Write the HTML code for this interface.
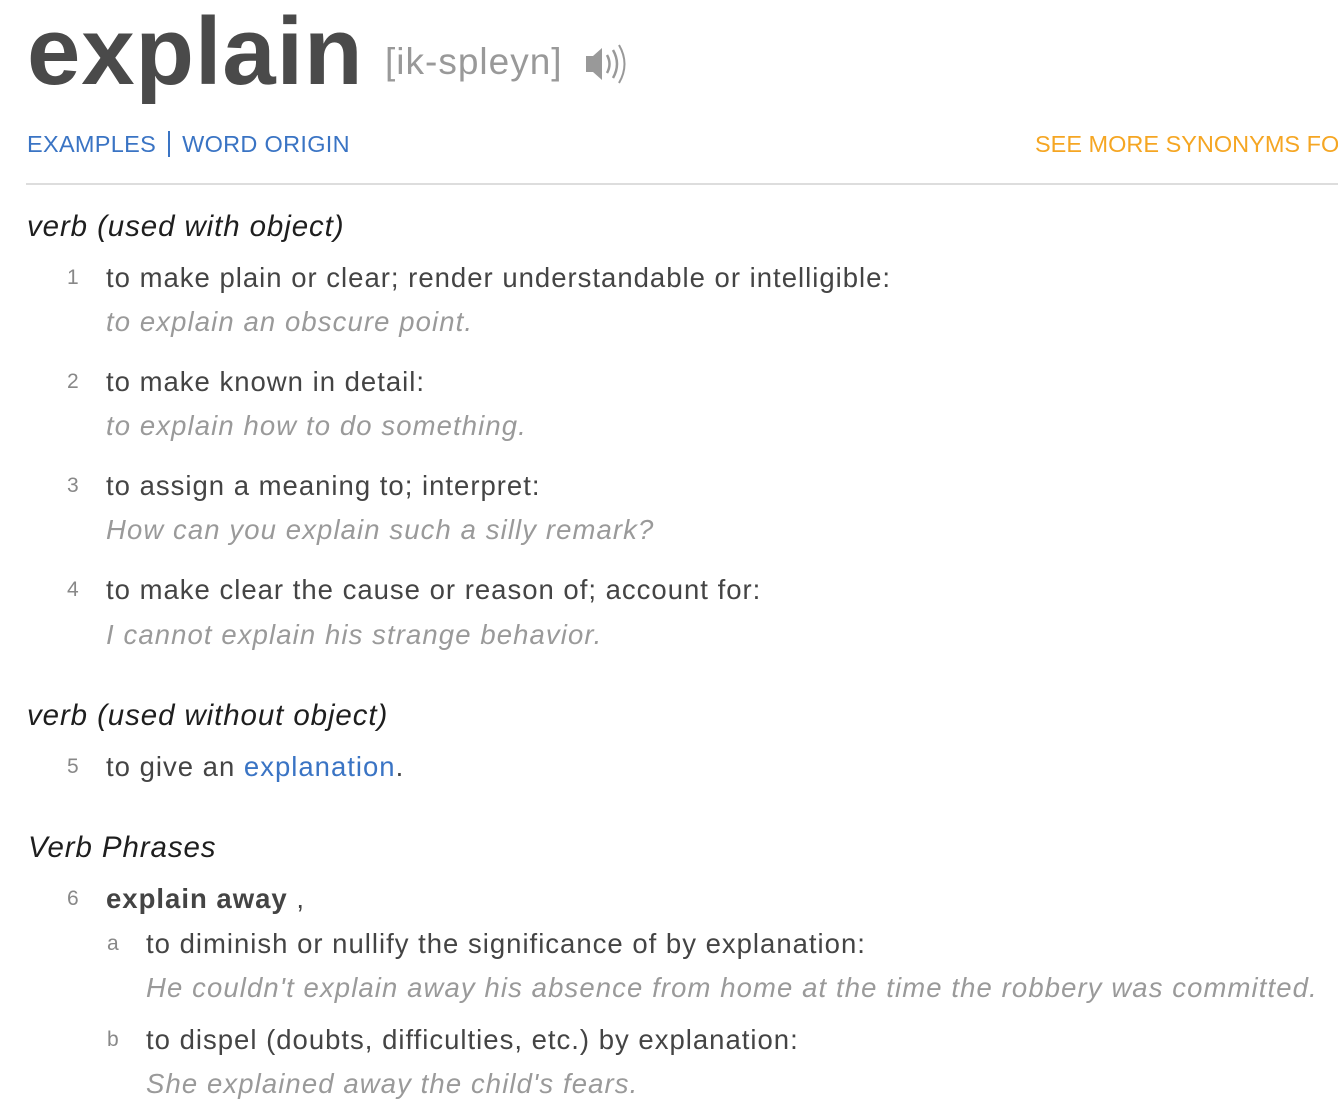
<!DOCTYPE html>
<html><head><meta charset="utf-8"><style>
html,body{margin:0;padding:0;background:#fff;width:1338px;height:1112px;overflow:hidden;position:relative;font-family:"Liberation Sans",Arial,sans-serif;}
.a{position:absolute;white-space:nowrap;line-height:30px;}
.h{font-size:96px;font-weight:bold;color:#4a4a4a;line-height:110px;letter-spacing:0.8px}
.pr{font-size:37px;color:#999;line-height:44px;letter-spacing:1px}
.nav{font-size:23.5px;color:#3a74c4;letter-spacing:0.3px}
.syn{font-size:23.5px;color:#f5a623}
.hd{font-size:29.5px;font-style:italic;color:#1e1e1e;letter-spacing:0.9px}
.n{font-size:21px;color:#888}
.d{font-size:27.5px;color:#444;letter-spacing:1px}
.e{font-size:27.5px;font-style:italic;color:#9a9a9a;letter-spacing:1.1px}
.lk{color:#3a74c4}
</style></head><body>
<div class="a h" style="left:27px;top:-3px">explain</div>
<div class="a pr" style="left:385px;top:40px">[ik-spleyn]</div>
<svg class="a" style="left:584px;top:42px" width="44" height="44" viewBox="0 0 44 44">
<path d="M2 14h7l9-8v32l-9-8H2z" fill="#999"/>
<path d="M23 13q5 9 0 18" stroke="#999" stroke-width="2.5" fill="none"/>
<path d="M29 8q8 14 0 28" stroke="#999" stroke-width="2.5" fill="none"/>
<path d="M35 3q11 19 0 38" stroke="#999" stroke-width="2" fill="none"/>
</svg>
<div class="a nav" style="left:27px;top:129px">EXAMPLES<span style="display:inline-block;width:2px;height:26px;background:#3a74c4;vertical-align:-5px;margin:0 12px 0 12px"></span>WORD ORIGIN</div>
<div class="a syn" style="left:1035px;top:129px">SEE MORE SYNONYMS FOR</div>
<div style="position:absolute;left:26px;top:183px;width:1312px;height:2px;background:#ddd"></div>

<div class="a hd" style="left:27px;top:212px">verb (used with object)</div>
<div class="a n" style="left:67px;top:263px">1</div>
<div class="a d" style="left:106px;top:263px">to make plain or clear; render understandable or intelligible:</div>
<div class="a e" style="left:106px;top:307px">to explain an obscure point.</div>
<div class="a n" style="left:67px;top:367px">2</div>
<div class="a d" style="left:106px;top:367px">to make known in detail:</div>
<div class="a e" style="left:106px;top:411px">to explain how to do something.</div>
<div class="a n" style="left:67px;top:471px">3</div>
<div class="a d" style="left:106px;top:471px">to assign a meaning to; interpret:</div>
<div class="a e" style="left:106px;top:515px">How can you explain such a silly remark?</div>
<div class="a n" style="left:67px;top:575px">4</div>
<div class="a d" style="left:106px;top:575px">to make clear the cause or reason of; account for:</div>
<div class="a e" style="left:106px;top:620px">I cannot explain his strange behavior.</div>

<div class="a hd" style="left:27px;top:701px">verb (used without object)</div>
<div class="a n" style="left:67px;top:752px">5</div>
<div class="a d" style="left:106px;top:752px">to give an <span class="lk">explanation</span>.</div>

<div class="a hd" style="left:28px;top:833px">Verb Phrases</div>
<div class="a n" style="left:67px;top:884px">6</div>
<div class="a d" style="left:106px;top:884px"><b>explain away</b> ,</div>
<div class="a n" style="left:107px;top:929px">a</div>
<div class="a d" style="left:146px;top:929px">to diminish or nullify the significance of by explanation:</div>
<div class="a e" style="left:146px;top:973px">He couldn't explain away his absence from home at the time the robbery was committed.</div>
<div class="a n" style="left:107px;top:1025px">b</div>
<div class="a d" style="left:146px;top:1025px">to dispel (doubts, difficulties, etc.) by explanation:</div>
<div class="a e" style="left:146px;top:1069px">She explained away the child's fears.</div>
</body></html>
